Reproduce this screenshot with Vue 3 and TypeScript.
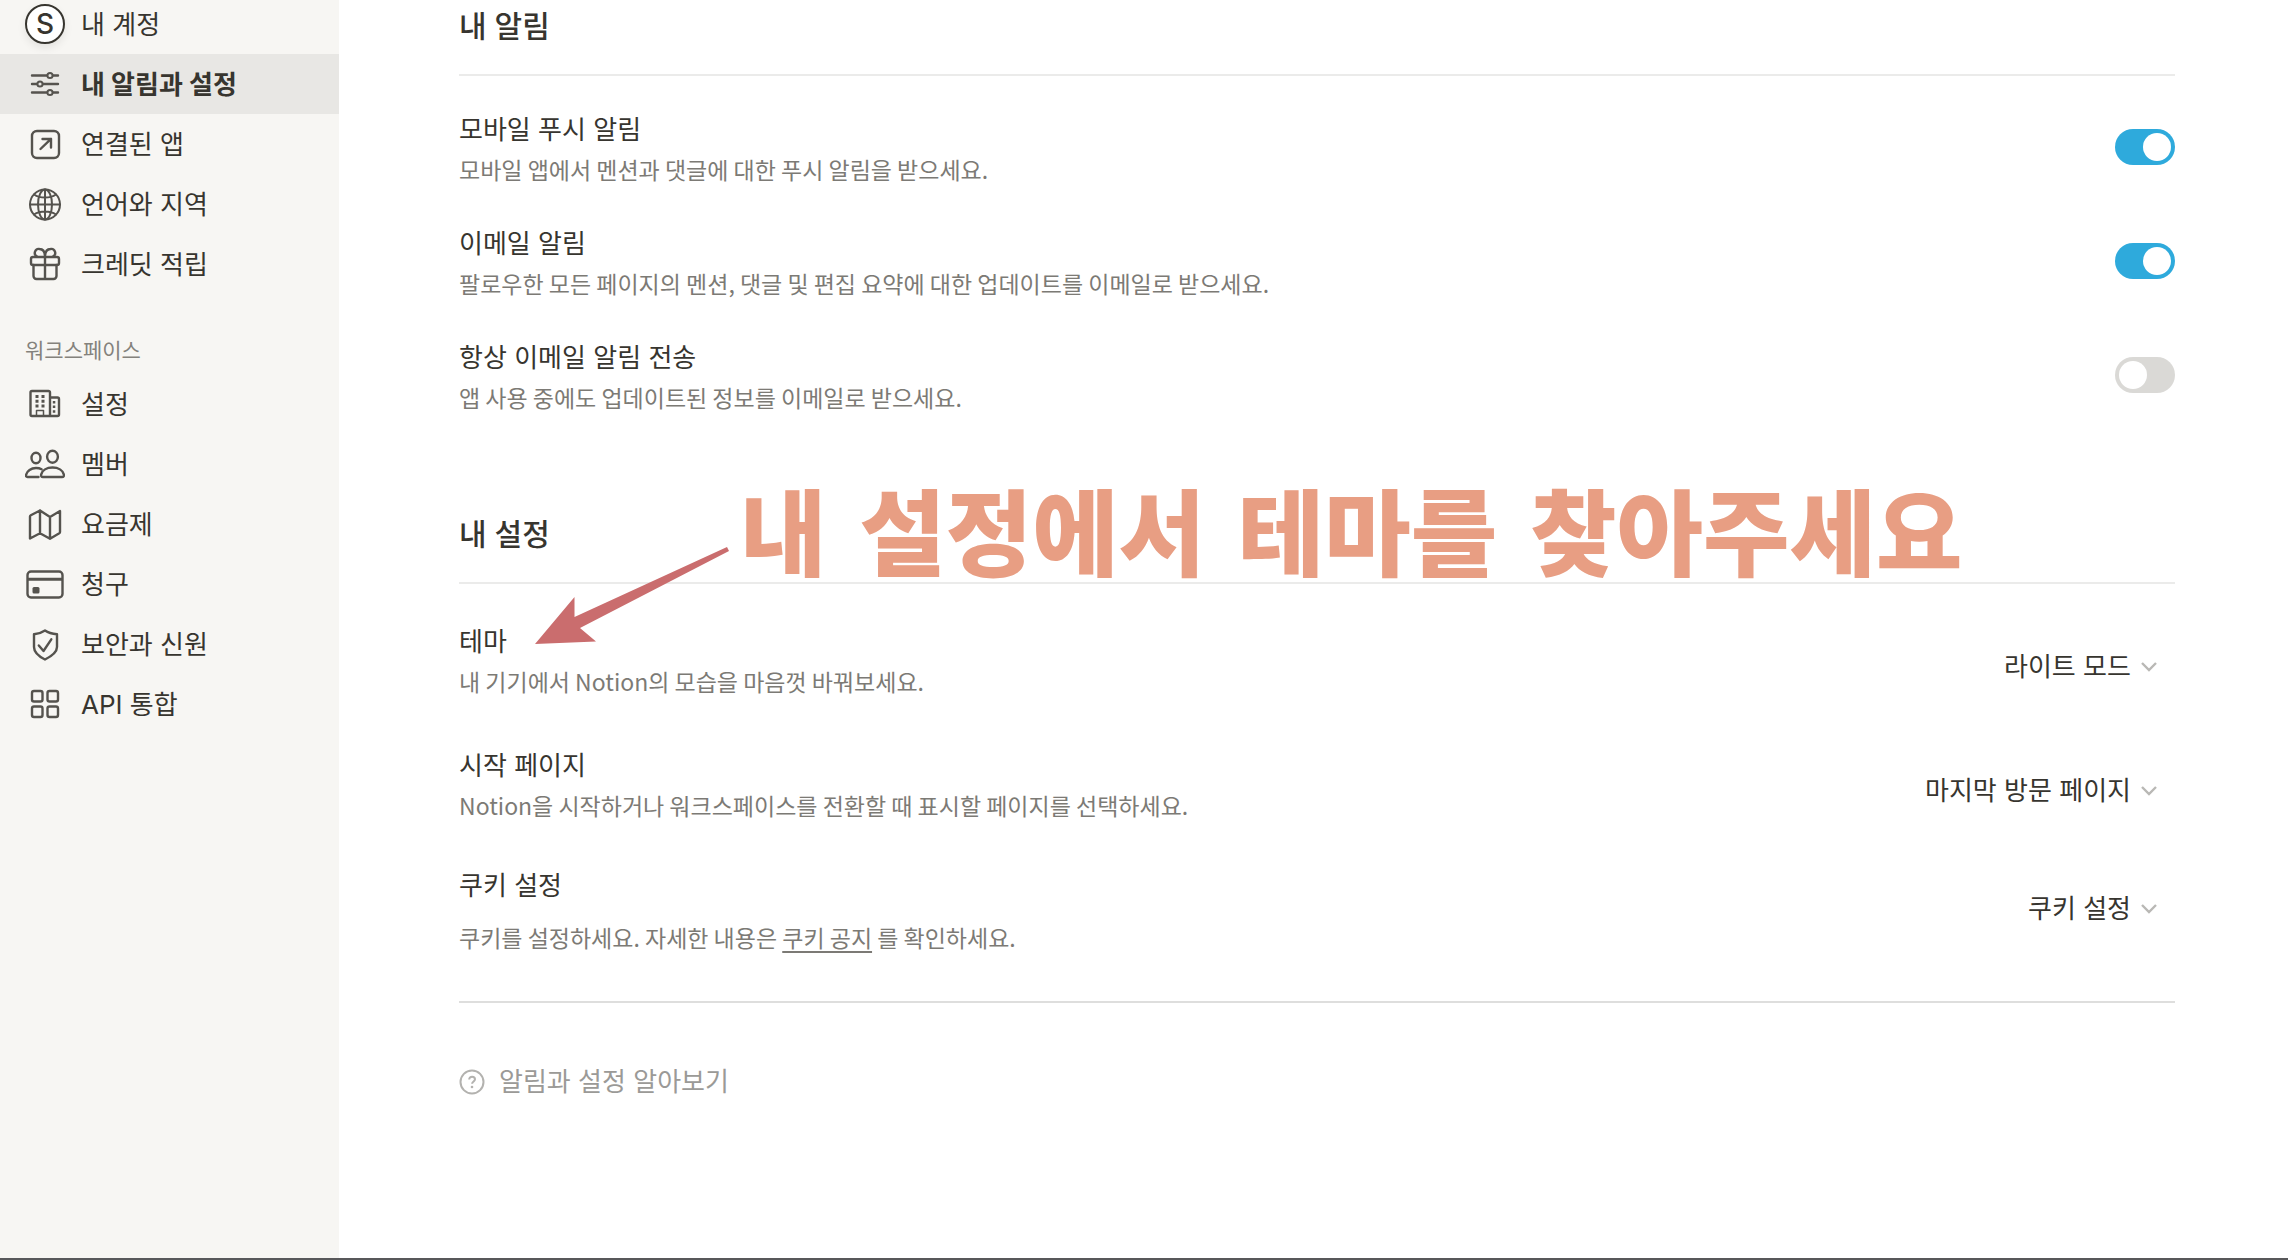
<script setup lang="ts">
import { ref } from 'vue'

interface NavItem {
  id: string
  label: string
}

interface Toggle {
  id: string
  title: string
  description: string
  on: boolean
}

const accountItems: NavItem[] = [
  { id: 'account', label: '내 계정' },
  { id: 'preferences', label: '내 알림과 설정' },
  { id: 'connections', label: '연결된 앱' },
  { id: 'language', label: '언어와 지역' },
  { id: 'credit', label: '크레딧 적립' },
]

const workspaceItems: NavItem[] = [
  { id: 'settings', label: '설정' },
  { id: 'members', label: '멤버' },
  { id: 'plans', label: '요금제' },
  { id: 'billing', label: '청구' },
  { id: 'security', label: '보안과 신원' },
  { id: 'api', label: 'API 통합' },
]

const groups = [
  { id: 'mine', title: '', items: accountItems },
  { id: 'workspace', title: '워크스페이스', items: workspaceItems },
]

const active = ref('preferences')

const toggles = ref<Toggle[]>([
  {
    id: 'push',
    title: '모바일 푸시 알림',
    description: '모바일 앱에서 멘션과 댓글에 대한 푸시 알림을 받으세요.',
    on: true,
  },
  {
    id: 'email',
    title: '이메일 알림',
    description: '팔로우한 모든 페이지의 멘션, 댓글 및 편집 요약에 대한 업데이트를 이메일로 받으세요.',
    on: true,
  },
  {
    id: 'always',
    title: '항상 이메일 알림 전송',
    description: '앱 사용 중에도 업데이트된 정보를 이메일로 받으세요.',
    on: false,
  },
])
</script>

<template>
  <div class="page">
    <nav class="sidebar">
      <div v-for="group in groups" :key="group.id" class="group">
        <h2 v-if="group.title" class="group-title">{{ group.title }}</h2>
        <button
          v-for="item in group.items"
          :key="item.id"
          type="button"
          class="nav-item"
          :class="{ active: item.id === active }"
          @click="active = item.id"
        >
          <span v-if="item.id === 'account'" class="avatar">S</span>
          <svg v-else class="icon" viewBox="0 0 40 40" stroke-width="2.4" aria-hidden="true">
            <template v-if="item.id === 'preferences'">
              <path d="M7 11.5h15M28 11.5h5M7 20h5M18 20h15M7 28.5h15M28 28.5h5" />
              <circle cx="25" cy="11.5" r="2.6" stroke-width="2" />
              <circle cx="15" cy="20" r="2.6" stroke-width="2" />
              <circle cx="25" cy="28.5" r="2.6" stroke-width="2" />
            </template>
            <template v-else-if="item.id === 'connections'">
              <rect x="7" y="7" width="27" height="27" rx="5" />
              <path d="M15.5 25 26 14.8M17.5 15h8.5v8.5" />
            </template>
            <template v-else-if="item.id === 'language'">
              <g stroke-width="2">
                <circle cx="20" cy="20.5" r="15" />
                <ellipse cx="20" cy="20.5" rx="7" ry="15" />
                <path d="M20 5.5v30M5 20.5h30M9 10.5c6 4 16 4 22 0M9 30.5c6-4 16-4 22 0" />
              </g>
            </template>
            <template v-else-if="item.id === 'credit'">
              <rect x="6" y="13" width="28" height="8" rx="2" />
              <path d="M8.5 21v11a3 3 0 0 0 3 3h17a3 3 0 0 0 3-3V21M20 13v22" />
              <path d="M20 13c0-5-2-8-5.5-8a4 4 0 0 0-2.500 7.500M20 13c0-5 2-8 5.500-8a4 4 0 0 1 2.500 7.500" />
            </template>
            <template v-else-if="item.id === 'settings'">
              <path d="M25 32H7a1.500 1.500 0 0 1-1.500-1.500V8.500A1.500 1.500 0 0 1 7 7h16.500A1.500 1.500 0 0 1 25 8.500zM25 13.500h7.500A1.500 1.500 0 0 1 34 15v15.500a1.500 1.500 0 0 1-1.500 1.500H25" />
              <path d="M11.500 32v-5.500h7V32" stroke-width="1.500" />
              <path
                class="solid"
                d="M10.500 11h3v3h-3zM16.500 11h3v3h-3zM10.500 15.800h3v3h-3zM16.500 15.800h3v3h-3zM10.500 20.600h3v3h-3zM16.500 20.600h3v3h-3zM27.800 17h2.500v2.500h-2.500zM27.800 21.600h2.500v2.500h-2.500zM27.800 26.200h2.500v2.500h-2.500z"
              />
            </template>
            <template v-else-if="item.id === 'members'">
              <ellipse cx="11" cy="14" rx="4.500" ry="5.200" />
              <ellipse cx="27.500" cy="12.800" rx="5.400" ry="6" />
              <path d="M18 33c-1.700 0-2.200-1-1.800-2.600C17.200 26.500 21.500 23.500 27.500 23.500s10.300 3 11.300 6.900c.4 1.600-.1 2.600-1.800 2.600z" />
              <path d="M13.500 33H2.500c-1.300 0-1.800-.8-1.400-2.200C2 27 6 24 11 24c2.200 0 4 .4 5.600 1.300" />
            </template>
            <template v-else-if="item.id === 'plans'">
              <path d="M5 12.500a1.500 1.500 0 0 1 .8-1.300L15 6.500l10 6.500 10-6v21a1.500 1.500 0 0 1-.7 1.300L25 34.800l-10-5.600-10 5.300zM15 6.500v22.700M25 13v21.800" />
            </template>
            <template v-else-if="item.id === 'billing'">
              <rect x="2.500" y="7.500" width="35" height="26" rx="3.500" />
              <path d="M3 15.300h34" stroke-width="3" stroke-linecap="butt" />
              <rect class="solid" x="7.500" y="23" width="7" height="6.500" rx="1.500" />
            </template>
            <template v-else-if="item.id === 'security'">
              <path d="M20 6.500c-3.200 2.200-6.800 3.400-11 3.800V23c0 5.500 4 9 11 12.500 7-3.500 12-7 12-12.500V10.300c-4.200-.4-8.800-1.600-12-3.800z" />
              <path d="M13.800 21.500 18.500 27l7.800-11.700" />
            </template>
            <template v-else>
              <rect x="7" y="7" width="10.500" height="10.500" rx="2" />
              <rect x="22.500" y="7" width="10.500" height="10.500" rx="2" />
              <rect x="7" y="22.500" width="10.500" height="10.500" rx="2" />
              <rect x="22.500" y="22.500" width="10.500" height="10.500" rx="2" />
            </template>
          </svg>
          <span class="nav-label">{{ item.label }}</span>
        </button>
      </div>
    </nav>

    <main class="content">
      <section class="section">
        <h1 class="heading">내 알림</h1>
        <div class="toggle-list">
          <div v-for="t in toggles" :key="t.id" class="row">
            <div class="text">
              <label class="title" :for="t.id">{{ t.title }}</label>
              <p class="desc">{{ t.description }}</p>
            </div>
            <input :id="t.id" v-model="t.on" type="checkbox" role="switch" class="switch" />
          </div>
        </div>
      </section>

      <section class="section settings">
        <h1 class="heading">내 설정</h1>
        <div class="choice-list">
          <div class="row choice">
            <div class="text">
              <label class="title" for="theme">테마</label>
              <p class="desc">내 기기에서 Notion의 모습을 마음껏 바꿔보세요.</p>
            </div>
            <div class="picker">
              <select id="theme"><option>라이트 모드</option></select>
              <svg viewBox="0 0 18 12" stroke-width="2.4" aria-hidden="true"><path d="M2 2l7 7 7-7" /></svg>
            </div>
          </div>
          <div class="row choice">
            <div class="text">
              <label class="title" for="start">시작 페이지</label>
              <p class="desc">Notion을 시작하거나 워크스페이스를 전환할 때 표시할 페이지를 선택하세요.</p>
            </div>
            <div class="picker">
              <select id="start"><option>마지막 방문 페이지</option></select>
              <svg viewBox="0 0 18 12" stroke-width="2.4" aria-hidden="true"><path d="M2 2l7 7 7-7" /></svg>
            </div>
          </div>
          <div class="row cookie">
            <div class="text">
              <label class="title" for="cookie">쿠키 설정</label>
              <p class="desc">쿠키를 설정하세요. 자세한 내용은 <a href="#cookie">쿠키 공지</a> 를 확인하세요.</p>
            </div>
            <div class="picker">
              <select id="cookie"><option>쿠키 설정</option></select>
              <svg viewBox="0 0 18 12" stroke-width="2.4" aria-hidden="true"><path d="M2 2l7 7 7-7" /></svg>
            </div>
          </div>
        </div>

        <div class="note">
          <svg class="arrow" viewBox="0 0 200 104" aria-hidden="true">
            <path d="M192 3 194 7 45 84 61 97.500 0 100 39.500 53V73z" />
          </svg>
          <p class="note-text">내 설정에서 테마를 찾아주세요</p>
        </div>
      </section>

      <a class="help" href="#help">
        <svg viewBox="0 0 26 26" stroke-width="2" aria-hidden="true">
          <circle cx="13" cy="13" r="11.500" />
          <path d="M10.200 10.600c0-1.800 1.200-2.900 2.900-2.900s2.900 1 2.900 2.600c0 2.100-2.900 2.200-2.900 4.500" />
          <circle class="dot" cx="13" cy="18" r="1.300" />
        </svg>
        <span>알림과 설정 알아보기</span>
      </a>
    </main>
  </div>
</template>

<style>
body {
  margin: 0;
  background: #ffffff;
}
</style>

<style scoped>
.page {
  display: flex;
  box-sizing: border-box;
  min-height: 100vh;
  overflow: hidden;
  border-bottom: 2px solid #58585a;
  color: #37352f;
  font-family: Inter, 'Noto Sans CJK KR', sans-serif;
  font-size: 26px;
}

.sidebar {
  flex: 0 0 339px;
  background: #f7f6f3;
}

.group:first-child {
  margin-top: -6px;
}

.group-title {
  margin: 0;
  padding: 41px 25px 7px;
  color: #84827c;
  font-size: 21px;
  font-weight: 400;
  line-height: 32px;
}

.nav-item {
  display: flex;
  align-items: center;
  gap: 16px;
  width: 100%;
  height: 60px;
  padding: 0 25px;
  border: 0;
  background: none;
  color: inherit;
  font: inherit;
  text-align: left;
  cursor: pointer;
}

.nav-label {
  padding-bottom: 4px;
}

.nav-item.active {
  background: #e8e7e4;
  font-weight: 700;
}

.avatar {
  display: flex;
  align-items: center;
  justify-content: center;
  box-sizing: border-box;
  width: 40px;
  height: 40px;
  border: 2px solid #37352f;
  border-radius: 50%;
  background: #ffffff;
  box-shadow: 0 4px 8px rgba(0, 0, 0, 0.08);
  font-size: 28px;
  font-weight: 500;
}

.icon {
  width: 40px;
  height: 40px;
  fill: none;
  stroke: #55534e;
  stroke-linecap: round;
  stroke-linejoin: round;
}

.icon .solid {
  fill: #55534e;
  stroke: none;
}

.content {
  flex: 1;
  padding: 6px 113px 0 120px;
}

.heading {
  margin: 0;
  padding-bottom: 28px;
  border-bottom: 2px solid #ebebea;
  font-size: 30px;
  font-weight: 500;
  line-height: 40px;
}

.settings {
  position: relative;
  margin-top: 105px;
  padding-bottom: 52px;
  border-bottom: 2px solid #dededd;
}

.toggle-list {
  display: flex;
  flex-direction: column;
  gap: 46px;
  padding-top: 37px;
}

.choice-list {
  display: flex;
  flex-direction: column;
  gap: 36px;
  padding-top: 41px;
}

.row {
  display: flex;
  align-items: center;
  justify-content: space-between;
}

.text {
  display: flex;
  flex-direction: column;
  gap: 10px;
}

.choice .text {
  padding-bottom: 16px;
}

.choice + .choice {
  margin-top: 4px;
}

.cookie .text {
  gap: 22px;
}

.title {
  line-height: 34px;
}

.desc {
  margin: 0;
  color: #7c7a75;
  font-family: 'Noto Sans CJK KR', sans-serif;
  font-size: 23px;
  line-height: 24px;
}

.desc a {
  color: inherit;
  text-decoration-thickness: 2px;
  text-underline-offset: 4px;
}

.switch {
  display: flex;
  align-items: center;
  box-sizing: border-box;
  width: 60px;
  height: 36px;
  margin: 0;
  padding: 4px;
  border-radius: 18px;
  background: #dad9d6;
  appearance: none;
  cursor: pointer;
}

.switch::before {
  width: 28px;
  height: 28px;
  border-radius: 50%;
  background: #ffffff;
  content: '';
}

.switch:checked {
  justify-content: flex-end;
  background: #2eaadc;
}

.picker {
  display: flex;
  align-items: center;
  gap: 9px;
  padding-right: 17px;
}

.picker select {
  padding: 0;
  border: 0;
  background: none;
  color: inherit;
  font: inherit;
  line-height: 40px;
  appearance: none;
  cursor: pointer;
}

.picker svg {
  width: 18px;
  height: 12px;
  fill: none;
  stroke: #b9b8b5;
}

.note {
  position: absolute;
  top: 30px;
  left: 76px;
  pointer-events: none;
}

.arrow {
  position: absolute;
  top: 0;
  left: 0;
  width: 200px;
  height: 104px;
  fill: #ca6d6e;
}

.note-text {
  position: absolute;
  top: -77px;
  left: 205px;
  margin: 0;
  color: #e89e83;
  font-family: 'DejaVu Sans', 'Noto Sans CJK KR', sans-serif;
  font-size: 94px;
  font-weight: 900;
  line-height: 140px;
  white-space: nowrap;
}

.help {
  display: flex;
  align-items: center;
  gap: 14px;
  width: max-content;
  margin-top: 61px;
  color: #9b9a97;
  line-height: 36px;
  text-decoration: none;
}

.help svg {
  width: 26px;
  height: 26px;
  fill: none;
  stroke: #b3b2af;
}

.help .dot {
  fill: #b3b2af;
  stroke: none;
}
</style>
